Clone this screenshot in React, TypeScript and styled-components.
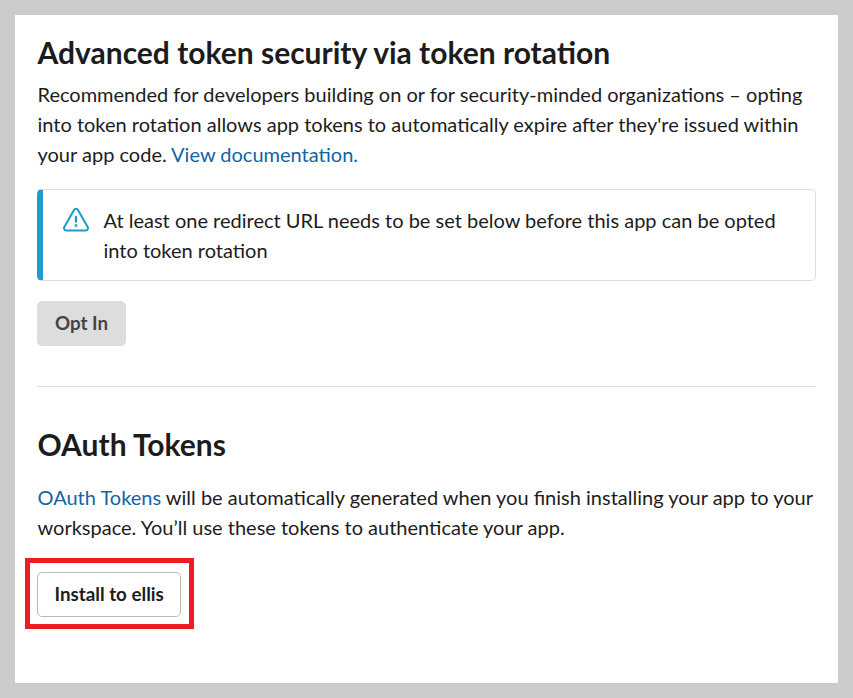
import React from 'react';
import styled, { createGlobalStyle } from 'styled-components';

const Global = createGlobalStyle`
  html, body {
    margin: 0;
    background: #cccccc;
    font-family: Lato, "Liberation Sans", sans-serif;
  }
`;

const Frame = styled.div`
  width: 853px;
  height: 698px;
  box-sizing: border-box;
  padding: 15px;
  overflow: hidden;
`;

const Panel = styled.div`
  background: #fff;
  height: 668px;
  box-sizing: border-box;
  padding: 19px 22px 0;
`;

const Heading = styled.h2`
  margin: 0;
  padding-left: 0.5px;
  font-size: 30px;
  line-height: 36px;
  font-weight: 700;
  color: #1d1c1d;
`;

const Body = styled.p<{ $gap?: number }>`
  margin: ${p => p.$gap ?? 9}px 0 0;
  padding-left: 0.5px;
  font-size: 20px;
  line-height: 30px;
  color: #1d1c1d;
`;

const Link = styled.a`
  color: #1264a3;
  text-decoration: none;
`;

const Notice = styled.div`
  margin-top: 20px;
  display: flex;
  gap: 13.5px;
  padding: 15px 20px 15px 19px;
  border: 1px solid #dddddd;
  border-left: 6px solid #1d9bd1;
  border-radius: 5px;
  font-size: 20px;
  line-height: 30px;
  color: #1d1c1d;
`;

const NoticeIcon = styled.svg`
  flex: none;
  width: 28px;
  height: 28px;
  margin-top: 1px;
`;

const Button = styled.button<{ $disabled?: boolean }>`
  display: block;
  height: 45px;
  box-sizing: border-box;
  padding: 0 ${p => (p.$disabled ? 17 : 16.5)}px 2px;
  border-radius: 5px;
  font-family: inherit;
  font-size: 18.8px;
  font-weight: 700;
  border: 1px solid ${p => (p.$disabled ? '#dddddd' : '#bbbabb')};
  background: ${p => (p.$disabled ? '#dddddd' : '#fff')};
  color: ${p => (p.$disabled ? '#454445' : '#1d1c1d')};
`;

const Actions = styled.div`
  margin-top: 20px;
`;

const Divider = styled.hr`
  margin: 40px 0 39px;
  border: none;
  border-top: 1px solid #dddddd;
`;

const InstallWrap = styled.div`
  margin-top: 30px;
  position: relative;
  width: fit-content;
`;

const Highlight = styled.div`
  position: absolute;
  inset: -14px -13px -12px -12px;
  border: 5px solid #ed1c24;
  pointer-events: none;
`;

export default function App() {
  return (
    <Frame>
      <Global />
      <Panel>
        <Heading>Advanced token security via token rotation</Heading>
        <Body>
          Recommended for developers building on or for security-minded organizations – opting
          into token rotation allows app tokens to automatically expire after they're issued within
          your app code. <Link href="#">View documentation.</Link>
        </Body>
        <Notice>
          <NoticeIcon viewBox="0 0 28 28" fill="none" stroke="#1d9bd1" strokeWidth="2" strokeLinejoin="round" strokeLinecap="round">
            <path d="M12 4 a2.3 2.3 0 0 1 4 0 L25.7 21 a2.3 2.3 0 0 1 -2 3.5 H4.3 a2.3 2.3 0 0 1 -2 -3.5 Z" />
            <path d="M14 11 V15.5" strokeWidth="2.4" />
            <circle cx="14" cy="19.6" r="0.5" fill="#1d9bd1" />
          </NoticeIcon>
          <span>At least one redirect URL needs to be set below before this app can be opted into token rotation</span>
        </Notice>
        <Actions>
          <Button $disabled>Opt In</Button>
        </Actions>
        <Divider />
        <Heading>OAuth Tokens</Heading>
        <Body $gap={20}>
          <Link href="#">OAuth Tokens</Link> will be automatically generated when you finish installing your app to your
          workspace. You’ll use these tokens to authenticate your app.
        </Body>
        <InstallWrap>
          <Button>Install to ellis</Button>
          <Highlight />
        </InstallWrap>
      </Panel>
    </Frame>
  );
}
